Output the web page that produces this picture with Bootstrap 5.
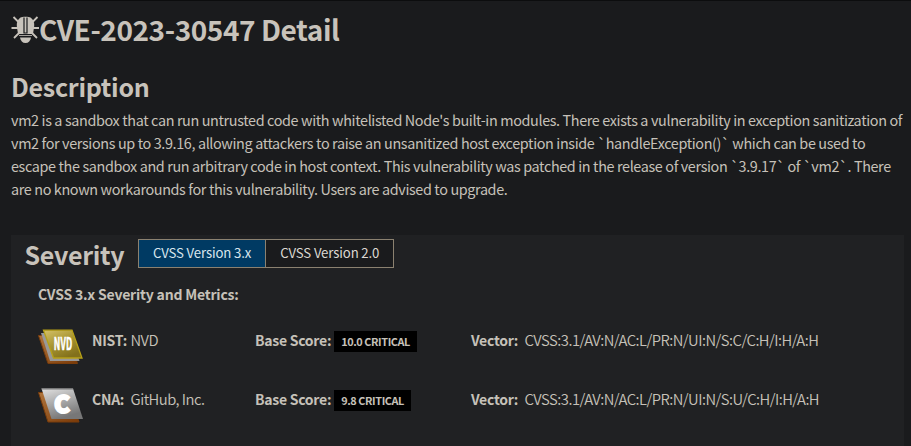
<!DOCTYPE html>
<html lang="en" data-bs-theme="dark">
<head>
<meta charset="utf-8">
<meta name="viewport" content="width=device-width, initial-scale=1">
<title>CVE-2023-30547 Detail</title>
<link href="https://cdn.jsdelivr.net/npm/bootstrap@5.3.0/dist/css/bootstrap.min.css" rel="stylesheet">
<style>
body{background:#1a1b1d;color:#c6c1b9;font-family:"Noto Sans CJK SC","Noto Sans",sans-serif;font-size:14.4px;line-height:23px;border-top:1px solid #0c0d0e;height:446px;overflow:hidden}
.page{padding:0 7px 0 11px}
h1,h2{font-weight:700;white-space:nowrap;color:#c8c3bb}
h1{font-size:28px;line-height:40px;padding-top:8px;letter-spacing:-.43px}
.bug{margin-right:-1px}
.section-title{font-size:25px;line-height:36px;letter-spacing:-.28px}
.desc-title{margin-top:19px}
.desc{white-space:nowrap;margin-top:4px;letter-spacing:-.37px}
.severity{background:#202123;margin-top:35px;height:220px;padding:4px 14px}
.sev-title{width:113px;line-height:31px;margin-left:-.5px;margin-right:.5px}
.version-tab{font-size:13.2px;line-height:26px;height:29px;border:1px solid #8b8170;padding:0 14px 1px;color:#dcd9d3;background:#1a1b1d;border-radius:0;white-space:nowrap;letter-spacing:-.13px}
.version-tab.active{background:#003a63;color:#d8e6ee}
.metrics-title{font-size:14px;padding-left:13px;margin-top:13px;letter-spacing:-.2px}
.metrics{margin-top:22px}
.metric-row{padding-left:13px;height:59px;white-space:nowrap}
.col-source{width:217px}
.col-score{width:216px}
.source-icon{width:54px;height:40px;flex:none;margin-top:1px}
.score-tag{background:#000;font-size:10.9px;font-weight:700;line-height:21px;padding:0 7px;margin-left:3px;letter-spacing:-.42px}
.thin{font-size:14.8px;font-weight:350;letter-spacing:-.51px}
strong{font-size:14px;letter-spacing:-.27px}
</style>
<script src="https://cdn.jsdelivr.net/npm/bootstrap@5.3.0/dist/js/bootstrap.bundle.min.js"></script>
</head>
<body>
<main class="page">
<h1 class="d-flex align-items-center mb-0"><svg class="bug" width="29" height="28" viewBox="0 0 29 28" fill="#c8c3bb" aria-hidden="true"><path d="M2.500 2L8 7.500M26.500 2L21 7.500M.5 13H28M3 23L8.500 17.500M26 23L20.500 17.500" stroke="#c8c3bb" stroke-width="1.800"/><path d="M9.500 2.500C11 1.500 18 1.500 19.500 2.500C22.500 4.500 23.500 8 23.200 11L22 19H7L5.800 11C5.500 8 6.500 4.500 9.500 2.500Z"/><path d="M8 20.500H21" stroke="#c8c3bb" stroke-width=".8"/><path d="M9 22.500H20C19.500 26 17.500 28 14.500 28S9.500 26 9 22.500Z"/><path d="M13 2.500V18H16V2.500" fill="none" stroke="#1a1b1d" stroke-width="1.200"/></svg><span>CVE-2023-30547 Detail</span></h1>
<h2 class="section-title desc-title mb-0">Description</h2>
<p class="desc mb-0">vm2 is a sandbox that can run untrusted code with whitelisted Node's built-in modules. There exists a vulnerability in exception sanitization of<br>vm2 for versions up to 3.9.16, allowing attackers to raise an unsanitized host exception inside `handleException()` which can be used to<br>escape the sandbox and run arbitrary code in host context. This vulnerability was patched in the release of version `3.9.17` of `vm2`. There<br>are no known workarounds for this vulnerability. Users are advised to upgrade.</p>
<section class="severity">
<div class="d-flex align-items-start">
<h2 class="section-title sev-title mb-0">Severity</h2>
<div class="d-flex" role="group"><button type="button" class="version-tab active">CVSS Version 3.x</button><button type="button" class="version-tab border-start-0">CVSS Version 2.0</button></div>
</div>
<div class="metrics-title fw-bold">CVSS 3.x Severity and Metrics:</div>
<div class="metrics">
<div class="metric-row d-flex align-items-start">
<div class="col-source d-flex align-items-start"><svg class="source-icon" viewBox="0 0 54 40" aria-hidden="true"><defs><linearGradient id="gold" x2=".6" y2="1"><stop stop-color="#d5c269"/><stop offset=".5" stop-color="#a99633"/><stop offset="1" stop-color="#82701b"/></linearGradient><linearGradient id="bronze" x2="1" y2="1"><stop stop-color="#b0763e"/><stop offset="1" stop-color="#7a3907"/></linearGradient><linearGradient id="silver" y2="1" x2=".4"><stop stop-color="#e2e2e2"/><stop offset="1" stop-color="#777"/></linearGradient></defs><path d="M.5 6.500H30L39.500 34.500H10Z" fill="url(#bronze)" stroke="#7a3d0b"/><path d="M3 4H32L41.500 32H12Z" fill="#999"/><path d="M5.500 1.200H34L44 29H15.500Z" fill="url(#gold)" stroke="#b6a017" stroke-width="1.300"/><text x="25" y="20.500" text-anchor="middle" font-family="Noto Sans CJK SC,sans-serif" font-size="17" font-weight="700" fill="#fff" stroke="#fff" stroke-width=".6" letter-spacing=".3" textLength="18.500" lengthAdjust="spacingAndGlyphs">NVD</text></svg><span><strong>NIST:</strong> <span class="thin">NVD</span></span></div>
<div class="col-score"><strong>Base Score:</strong><span class="score-tag d-inline-block">10.0 CRITICAL</span></div>
<div><strong>Vector:</strong>&nbsp; <span class="thin">CVSS:3.1/AV:N/AC:L/PR:N/UI:N/S:C/C:H/I:H/A:H</span></div>
</div>
<div class="metric-row d-flex align-items-start">
<div class="col-source d-flex align-items-start"><svg class="source-icon" viewBox="0 0 54 40" aria-hidden="true"><path d="M.5 4.500H31L41 34H10Z" fill="url(#bronze)" stroke="#7a3d0b"/><path d="M3.500 .5H35L45 31H13.500Z" fill="url(#silver)"/><path d="M3.500 1H35" stroke="#777"/><text x="24" y="24.800" text-anchor="middle" font-family="Noto Sans CJK SC,sans-serif" font-size="24" font-weight="900" fill="#fff" stroke="#fff" stroke-width="2" textLength="16" lengthAdjust="spacingAndGlyphs">C</text></svg><span><strong>CNA:</strong>&nbsp; <span class="thin">GitHub, Inc.</span></span></div>
<div class="col-score"><strong>Base Score:</strong><span class="score-tag d-inline-block">9.8 CRITICAL</span></div>
<div><strong>Vector:</strong>&nbsp; <span class="thin">CVSS:3.1/AV:N/AC:L/PR:N/UI:N/S:U/C:H/I:H/A:H</span></div>
</div>
</div>
</section>
</main>
</body>
</html>
